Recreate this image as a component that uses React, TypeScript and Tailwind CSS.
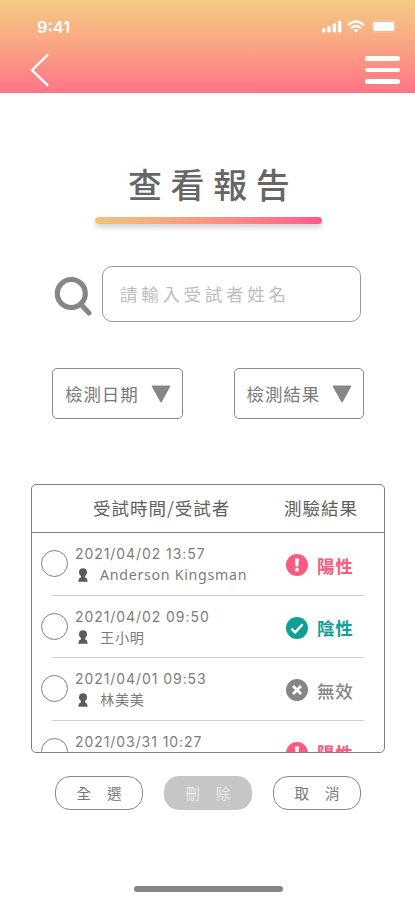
import React from "react";

type Result = "positive" | "negative" | "invalid";

interface Report {
  time: string;
  name: string;
  result: Result;
}

const reports: Report[] = [
  { time: "2021/04/02 13:57", name: "Anderson Kingsman", result: "positive" },
  { time: "2021/04/02 09:50", name: "王小明", result: "negative" },
  { time: "2021/04/01 09:53", name: "林美美", result: "invalid" },
  { time: "2021/03/31 10:27", name: "", result: "positive" },
];

const results: Record<Result, { label: string; tone: string }> = {
  positive: { label: "陽性", tone: "font-bold text-[#fd5a80]" },
  negative: { label: "陰性", tone: "font-bold text-[#0fa094]" },
  invalid: { label: "無效", tone: "font-medium text-[#868686]" },
};

function StatusIcon({ result }: { result: Result }) {
  return (
    <svg viewBox="0 0 22 22" className="size-[22px] shrink-0">
      <circle cx="11" cy="11" r="11" fill="currentColor" />
      {result === "positive" && (
        <g fill="#fff">
          <path d="M8.9 4.4h4.2l-.8 8.2H9.7z" />
          <circle cx="11" cy="15.7" r="1.9" />
        </g>
      )}
      {result === "negative" && (
        <path d="M5.4 11.6l3.8 3.8 7.4-8.2" fill="none" stroke="#fff" strokeWidth="2.4" />
      )}
      {result === "invalid" && (
        <path d="M7 7l8 8M15 7l-8 8" fill="none" stroke="#fff" strokeWidth="2.7" />
      )}
    </svg>
  );
}

function PersonIcon() {
  return (
    <svg viewBox="0 0 12 14" className="h-[14px] w-3 shrink-0" fill="#5c5c5c">
      <circle cx="6" cy="4.3" r="4" />
      <path d="M4 7h4v2.2l2 1.3.7 3.2H1.3L2 10.500l2-1.300z" />
    </svg>
  );
}

function Select({ label }: { label: string }) {
  return (
    <button className="flex h-[51px] w-[130.5px] items-center justify-between rounded-[5px] border border-[#8c8c8c] pl-3 pr-[11px] text-[17.5px] leading-none tracking-[0.9px] text-[#7a7a7a]">
      <span className="whitespace-nowrap">{label}</span>
      <svg viewBox="0 0 20 18" className="h-[18px] w-5 shrink-0">
        <path d="M1.5 1.2h17L10 16.500z" fill="#868686" stroke="#868686" strokeWidth="1.6" strokeLinejoin="round" />
      </svg>
    </button>
  );
}

function ReportRow({ report }: { report: Report }) {
  const { label, tone } = results[report.result];
  return (
    <li className="flex h-[62.6px] shrink-0 flex-col">
      <div className="flex flex-1 items-center pl-[9px]">
        <span className="size-[27px] shrink-0 rounded-full border border-[#808080]" />
        <div className="ml-[7px] w-[211px] whitespace-nowrap pt-px text-[#7c7c7c]">
          <p className="font-['Inter',sans-serif] text-[14px] leading-[21px] tracking-[0.93px]">{report.time}</p>
          <div className="flex h-[21px] items-center gap-[11px] pl-0.5">
            <PersonIcon />
            {report.name && (
              <p className="font-['Noto_Sans','Noto_Sans_CJK_TC',sans-serif] text-[14.2px] leading-[21px] tracking-[0.72px]">
                {report.name}
              </p>
            )}
          </div>
        </div>
        <div className={`flex items-center gap-[9px] pt-[3px] text-[17.5px] leading-none tracking-[0.8px] ${tone}`}>
          <StatusIcon result={report.result} />
          <span>{label}</span>
        </div>
      </div>
      <div className="ml-[20px] mr-5 h-px bg-[#d0d0d0]" />
    </li>
  );
}

export default function App() {
  return (
    <div className="flex h-[900px] w-[415px] flex-col overflow-hidden bg-white font-['Noto_Sans_CJK_TC',sans-serif]">
      <header className="flex h-[93px] shrink-0 flex-col bg-linear-to-b from-[#f5cb83] via-[#f9a383] to-[#ff7386]">
        <div className="flex h-[54px] items-center justify-between pl-[37px] pr-[17px]">
          <span className="font-['Inter',sans-serif] text-[16.5px] font-semibold leading-none text-white">9:41</span>
          <div className="flex items-center pb-0.5 text-white">
            <svg viewBox="0 0 20 13" className="h-[13px] w-5" fill="currentColor">
              <rect x="0" y="8.5" width="3.5" height="4" rx="1" />
              <rect x="5.3" y="6.2" width="3.5" height="6.3" rx="1" />
              <rect x="10.6" y="3.5" width="3.5" height="9" rx="1" />
              <rect x="15.9" y="0.8" width="3.5" height="11.7" rx="1" />
            </svg>
            <svg viewBox="0 0 18 13" className="ml-[5px] mr-[7px] h-[13px] w-[18px]" fill="none" stroke="currentColor">
              <path d="M1 5.2Q9-2.1 17 5.2" strokeWidth="2.4" />
              <path d="M4 8.2q5-4.4 10 0" strokeWidth="2.2" />
              <path d="M6.4 10.1q2.6-2 5.2 0L9 12.8z" fill="currentColor" stroke="none" />
            </svg>
            <svg viewBox="0 0 26 13" className="h-[13px] w-[26px]">
              <rect x="0.7" y="0.8" width="22" height="11.4" rx="3" fill="none" stroke="#fff" strokeOpacity="0.25" />
              <rect x="1.5" y="2" width="20.500" height="9" rx="1.6" fill="#fff" />
              <path d="M24 4.5q2 2 0 4z" fill="#fff" fillOpacity="0.4" />
            </svg>
          </div>
        </div>
        <div className="flex h-8 items-center justify-between pl-[30px] pr-[15px]">
          <svg viewBox="0 0 20 34" className="h-[34px] w-5" fill="none" stroke="#fff" strokeWidth="2.4" strokeLinecap="round">
            <path d="M17.5 2L2 17.2l15.500 15" />
          </svg>
          <div className="flex w-[35px] flex-col gap-[7px]">
            <span className="h-[4.5px] rounded-full bg-white" />
            <span className="h-[4.5px] rounded-full bg-white" />
            <span className="h-[4.5px] rounded-full bg-white" />
          </div>
        </div>
      </header>

      <main className="flex flex-col">
        <div className="ml-[95px] mt-[71px] flex w-[227px] flex-col">
          <h1 className="pl-[33px] text-[34px] font-medium leading-[40px] tracking-[8.6px] text-[#666]">查看報告</h1>
          <div className="mt-[13px] h-[7px] rounded-full bg-linear-to-r from-[#efc578] via-[#fb9681] to-[#fd5a8b] shadow-[0_4px_4px_rgba(0,0,0,0.14)]" />
        </div>

        <div className="mt-[42px] flex h-14 items-center pl-[54px]">
          <svg viewBox="0 0 38 42" className="mt-1.5 h-[42px] w-[38px]" fill="none" stroke="#868686" strokeLinecap="round">
            <circle cx="17.3" cy="17.5" r="14" strokeWidth="5.2" />
            <path d="M27.5 29l7.500 8" strokeWidth="5" />
          </svg>
          <input
            placeholder="請輸入受試者姓名"
            className="ml-2.5 h-14 w-[259px] rounded-[10px] border border-[#999] bg-white pb-0.5 pl-[17px] text-[17.5px] tracking-[3.7px] outline-none placeholder:text-[#bdbdbd]"
          />
        </div>

        <div className="mt-[46px] flex gap-[51px] pl-[52px]">
          <Select label="檢測日期" />
          <Select label="檢測結果" />
        </div>

        <section className="ml-[31px] mt-[65px] flex h-[269px] w-[354px] flex-col overflow-hidden rounded-[5px] border border-[#808080]">
          <div className="flex h-[48px] shrink-0 items-center border-b border-[#808080] pb-0.5 pl-[61px] text-[17.5px] leading-none tracking-[1px] text-[#606060]">
            <span className="w-[191px]">受試時間/受試者</span>
            <span>測驗結果</span>
          </div>
          <ul className="flex flex-col">
            {reports.map((report) => (
              <ReportRow key={report.time} report={report} />
            ))}
          </ul>
        </section>

        <div className="mt-[23px] flex gap-[21px] pl-[55px] text-[14.5px] leading-none">
          <button className="flex h-[34px] w-[88px] items-center justify-center gap-4 rounded-[15px] border border-[#888] text-[#777]">
            <span>全</span>
            <span>選</span>
          </button>
          <button className="flex h-[34px] w-[88px] items-center justify-center gap-4 rounded-[15px] bg-[#c6c6c6] text-[#e9e9e9]">
            <span>刪</span>
            <span>除</span>
          </button>
          <button className="flex h-[34px] w-[88px] items-center justify-center gap-4 rounded-[15px] border border-[#888] text-[#777]">
            <span>取</span>
            <span>消</span>
          </button>
        </div>
      </main>

      <div className="ml-[134px] mt-[76px] h-[5.5px] w-[149px] shrink-0 rounded-full bg-[#868686]" />
    </div>
  );
}
